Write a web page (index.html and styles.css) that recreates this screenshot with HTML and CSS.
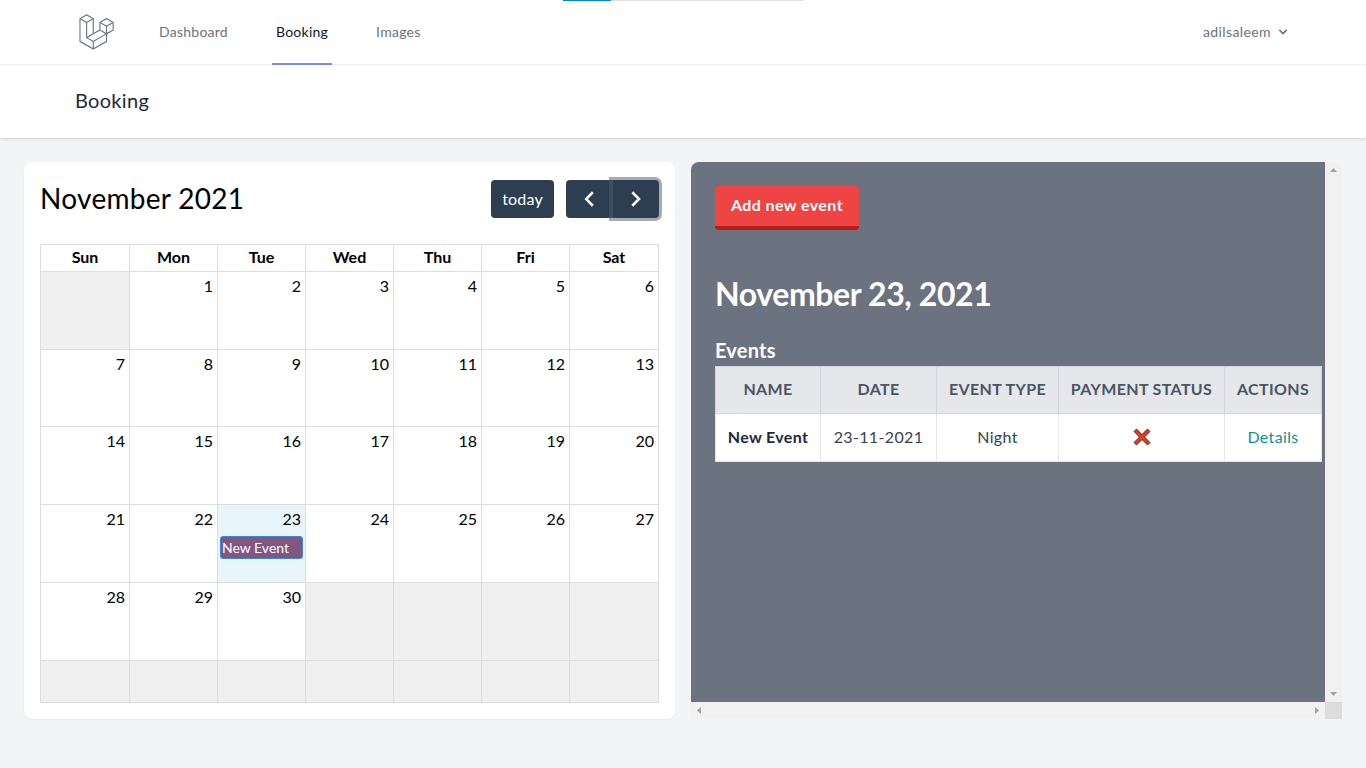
FILE: index.html
```html
<!DOCTYPE html>
<html lang="en">
<head>
    <title>Booking</title>
    <link rel="stylesheet" href="styles.css">
</head>
<body>
    <!-- page load progress -->
    <div class="progress">
        <div class="progress-done"></div>
        <div class="progress-rest"></div>
    </div>

    <nav class="topnav">
        <div class="topnav-left">
            <svg class="logo" viewBox="0 0 316 316" xmlns="http://www.w3.org/2000/svg"><path d="M305.8 81.125C305.77 80.995 305.69 80.885 305.65 80.755C305.56 80.525 305.49 80.285 305.37 80.075C305.29 79.935 305.17 79.815 305.07 79.685C304.94 79.515 304.83 79.325 304.68 79.175C304.55 79.045 304.39 78.955 304.25 78.845C304.09 78.715 303.95 78.575 303.77 78.475L251.32 48.275C249.97 47.495 248.31 47.495 246.96 48.275L194.51 78.475C194.33 78.575 194.19 78.725 194.03 78.845C193.89 78.955 193.73 79.045 193.6 79.175C193.45 79.325 193.34 79.515 193.21 79.685C193.11 79.815 192.99 79.935 192.91 80.075C192.79 80.285 192.71 80.525 192.63 80.755C192.58 80.875 192.51 80.995 192.48 81.125C192.38 81.495 192.33 81.875 192.33 82.265V139.625L148.62 164.795V52.575C148.62 52.185 148.57 51.805 148.47 51.435C148.44 51.305 148.36 51.195 148.32 51.065C148.23 50.835 148.16 50.595 148.04 50.385C147.96 50.245 147.84 50.125 147.74 49.995C147.61 49.825 147.5 49.635 147.35 49.485C147.22 49.355 147.06 49.265 146.92 49.155C146.76 49.025 146.62 48.885 146.44 48.785L93.99 18.585C92.64 17.805 90.98 17.805 89.63 18.585L37.18 48.785C37 48.885 36.86 49.035 36.7 49.155C36.56 49.265 36.4 49.355 36.27 49.485C36.12 49.635 36.01 49.825 35.88 49.995C35.78 50.125 35.66 50.245 35.58 50.385C35.46 50.595 35.38 50.835 35.3 51.065C35.25 51.185 35.18 51.305 35.15 51.435C35.05 51.805 35 52.185 35 52.575V232.235C35 233.795 35.84 235.245 37.19 236.025L142.1 296.425C142.33 296.555 142.58 296.635 142.83 296.725C142.95 296.765 143.06 296.835 143.18 296.865C143.55 296.965 143.93 297.015 144.31 297.015C144.69 297.015 145.07 296.965 145.44 296.865C145.55 296.835 145.65 296.775 145.76 296.735C146.02 296.645 146.28 296.565 146.52 296.425L251.43 236.025C252.79 235.245 253.62 233.805 253.62 232.235V174.885L303.88 145.945C305.24 145.165 306.07 143.725 306.07 142.155V82.265C305.95 81.875 305.89 81.495 305.8 81.125ZM144.2 227.205L100.57 202.515L146.39 176.135L196.66 147.195L240.33 172.335L208.29 190.625L144.2 227.205ZM244.75 114.995V164.795L226.39 154.225L201.03 139.625V89.825L219.39 100.395L244.75 114.995ZM249.12 57.105L292.81 82.265L249.12 107.425L205.43 82.265L249.12 57.105ZM114.49 184.425L96.13 194.995V85.305L121.49 70.705L139.85 60.135V169.815L114.49 184.425ZM91.76 27.425L135.45 52.585L91.76 77.745L48.07 52.585L91.76 27.425ZM43.67 60.135L62.03 70.705L87.39 85.305V202.545V202.555V202.565C87.39 202.735 87.44 202.895 87.46 203.055C87.49 203.265 87.49 203.485 87.55 203.695V203.705C87.6 203.875 87.69 204.035 87.76 204.195C87.84 204.375 87.89 204.575 87.99 204.745C87.99 204.745 87.99 204.755 88 204.755C88.09 204.905 88.22 205.035 88.33 205.175C88.45 205.335 88.55 205.495 88.69 205.635L88.7 205.645C88.82 205.765 88.98 205.855 89.12 205.965C89.28 206.085 89.42 206.225 89.59 206.325C89.6 206.325 89.6 206.325 89.61 206.335C89.62 206.335 89.62 206.345 89.63 206.345L139.87 234.775V285.065L43.67 229.705V60.135ZM244.75 229.705L148.58 285.075V234.775L219.8 194.115L244.75 179.875V229.705ZM297.2 139.625L253.49 164.795V114.995L278.85 100.395L297.21 89.825V139.625H297.2Z"/></svg>
            <a class="navlink" href="#">Dashboard</a>
            <a class="navlink active" href="#">Booking</a>
            <a class="navlink" href="#">Images</a>
        </div>
        <div class="usermenu">
            <span>adilsaleem</span>
            <svg class="chevron" viewBox="0 0 20 20"><path fill-rule="evenodd" d="M5.293 7.293a1 1 0 011.414 0L10 10.586l3.293-3.293a1 1 0 111.414 1.414l-4 4a1 1 0 01-1.414 0l-4-4a1 1 0 010-1.414z" clip-rule="evenodd"/></svg>
        </div>
    </nav>

    <header class="pagehead">
        <h2>Booking</h2>
    </header>

    <main class="columns">
        <!-- calendar -->
        <section class="card">
            <div class="cal-toolbar">
                <h3>November 2021</h3>
                <div class="cal-buttons">
                    <button class="cal-btn today-btn">today</button>
                    <div class="cal-group">
                        <button class="cal-btn arrow-btn">
                            <svg viewBox="0 0 16 16"><path d="M11.400 2 5.400 8l6 6"/></svg>
                        </button>
                        <button class="cal-btn arrow-btn focused">
                            <svg viewBox="0 0 16 16"><path d="M4.700 2l6 6-6 6"/></svg>
                        </button>
                    </div>
                </div>
            </div>
            <table class="cal">
                <thead>
                    <tr><th>Sun</th><th>Mon</th><th>Tue</th><th>Wed</th><th>Thu</th><th>Fri</th><th>Sat</th></tr>
                </thead>
                <tbody>
                    <tr class="wk-a"><td class="off"></td><td>1</td><td>2</td><td>3</td><td>4</td><td>5</td><td>6</td></tr>
                    <tr class="wk-b"><td>7</td><td>8</td><td>9</td><td>10</td><td>11</td><td>12</td><td>13</td></tr>
                    <tr class="wk-a"><td>14</td><td>15</td><td>16</td><td>17</td><td>18</td><td>19</td><td>20</td></tr>
                    <tr class="wk-a"><td>21</td><td>22</td><td class="now">23<div class="cal-event">New Event</div></td><td>24</td><td>25</td><td>26</td><td>27</td></tr>
                    <tr class="wk-a"><td>28</td><td>29</td><td>30</td><td class="off"></td><td class="off"></td><td class="off"></td><td class="off"></td></tr>
                    <tr class="wk-last"><td class="off"></td><td class="off"></td><td class="off"></td><td class="off"></td><td class="off"></td><td class="off"></td><td class="off"></td></tr>
                </tbody>
            </table>
        </section>

        <!-- selected day -->
        <section class="daybox">
            <div class="day-panel">
                <button class="add-btn">Add new event</button>
                <h1>November 23, 2021</h1>
                <h4>Events</h4>
                <table class="events">
                    <thead>
                        <tr><th class="c1">NAME</th><th class="c2">DATE</th><th class="c3">EVENT TYPE</th><th class="c4">PAYMENT STATUS</th><th class="c5">ACTIONS</th></tr>
                    </thead>
                    <tbody>
                        <tr>
                            <td class="ev-name">New Event</td>
                            <td>23-11-2021</td>
                            <td>Night</td>
                            <td>
                                <svg class="cross" viewBox="0 0 18 18"><path d="M3.500 1 9 6.500 14.500 1 17 3.500 11.500 9 17 14.500 14.500 17 9 11.500 3.500 17 1 14.500 6.500 9 1 3.500z"/></svg>
                            </td>
                            <td><a class="details" href="#">Details</a></td>
                        </tr>
                    </tbody>
                </table>
            </div>
            <div class="vbar">
                <svg viewBox="0 0 17 17"><path d="M8.500 6 12 10H5z"/></svg>
                <svg viewBox="0 0 17 17"><path d="M5 7h7l-3.500 4z"/></svg>
            </div>
            <div class="hbar">
                <svg viewBox="0 0 17 17"><path d="M10 5v7L6 8.500z"/></svg>
                <svg viewBox="0 0 17 17"><path d="M7 5v7l4-3.500z"/></svg>
            </div>
            <div class="corner"></div>
        </section>
    </main>
</body>
</html>
```

FILE: styles.css
```css
* {
    box-sizing: border-box;
}

html,
body {
    height: 100%;
}

body {
    margin: 0;
    font-family: Lato, "Noto Sans", Arial, sans-serif;
    font-size: 16px;
    color: #111827;
    background-color: #f3f4f6;
    overflow: hidden;
}

a {
    text-decoration: none;
}

button {
    font-family: inherit;
    border: none;
}

.progress {
    display: flex;
    height: 1px;
    padding-left: 563px;
    background-color: #fff;
}

.progress-done {
    width: 48px;
    background-color: #0a80e2;
}

.progress-rest {
    width: 193px;
    background-color: #e2e2e2;
}

/* top nav */
.topnav {
    display: flex;
    justify-content: space-between;
    align-items: stretch;
    height: 64px;
    padding: 0 75px;
    background-color: #fff;
    border-bottom: 1px solid #f3f4f6;
}

.topnav-left {
    display: flex;
    align-items: stretch;
}

.logo {
    width: 40px;
    height: 40px;
    margin: 11px 40px 0 0;
    fill: #6b7280;
}

.navlink {
    display: flex;
    align-items: center;
    height: 64px;
    padding: 0 4px 2px;
    margin-right: 40px;
    font-size: 14px;
    letter-spacing: 0.25px;
    color: #6b7280;
    border-bottom: 2px solid transparent;
}

.navlink.active {
    color: #111827;
    border-bottom-color: #818cf8;
}

.usermenu {
    display: flex;
    align-items: center;
    padding-bottom: 2px;
    font-size: 14px;
    letter-spacing: 0.4px;
    color: #6b7280;
}

.chevron {
    width: 16px;
    height: 16px;
    margin-left: 4px;
    fill: #6b7280;
}

.pagehead {
    height: 73px;
    padding: 0 75px 3px;
    display: flex;
    align-items: center;
    background-color: #fff;
    box-shadow: 0 1px 3px rgba(0, 0, 0, 0.15);
    position: relative;
}

.pagehead h2 {
    margin: 0;
    font-size: 20px;
    font-weight: 400;
    letter-spacing: 0.3px;
    color: #1f2937;
}

/* two columns */
.columns {
    display: grid;
    grid-template-columns: 651px 651px;
    gap: 16px;
    padding: 24px 24px 0;
}

.card {
    height: 557px;
    padding: 16px;
    background-color: #fff;
    border-radius: 8px;
    box-shadow: 0 1px 2px rgba(0, 0, 0, 0.06);
}

.cal-toolbar {
    display: flex;
    justify-content: space-between;
    align-items: center;
    height: 40px;
    margin-top: 1px;
    margin-bottom: 25px;
}

.cal-toolbar h3 {
    margin: 0;
    padding-bottom: 3px;
    font-size: 28px;
    font-weight: 400;
    letter-spacing: 0.3px;
    color: #000;
}

.cal-buttons {
    display: flex;
    gap: 12px;
}

.cal-btn {
    height: 38px;
    color: #fff;
    background-color: #2c3e50;
    border-radius: 4px;
    font-size: 16px;
}

.today-btn {
    width: 63px;
    padding: 0 0 2px;
    letter-spacing: 0.2px;
}

.cal-group {
    display: flex;
}

.arrow-btn {
    width: 46px;
    padding: 0;
    display: flex;
    align-items: center;
    justify-content: center;
    border-radius: 4px 0 0 4px;
}

.arrow-btn svg {
    width: 18px;
    height: 18px;
    fill: none;
    stroke: #fff;
    stroke-width: 2.2;
}

.arrow-btn.focused {
    width: 47px;
    border-radius: 0 4px 4px 0;
    border-left: 1px solid #3e5163;
    box-shadow: 0 0 0 3px rgba(76, 91, 106, 0.5);
    position: relative;
}

/* calendar table */
.cal {
    width: 618px;
    table-layout: fixed;
    border-collapse: collapse;
    font-size: 16px;
    color: #000;
}

.cal th,
.cal td {
    border: 1px solid #ddd;
}

.cal th {
    width: 88px;
    height: 27px;
    padding: 0 0 2px;
    font-weight: 700;
    line-height: 1;
}

.cal th:first-child,
.cal th:last-child {
    width: 89px;
}

.cal td {
    padding: 4px 4px 0;
    text-align: right;
    vertical-align: top;
}

.wk-a td {
    height: 78px;
}

.wk-b td {
    height: 77px;
}

.wk-last td {
    height: 42px;
}

.cal td.off {
    background-color: #f0f0f0;
}

.cal td.now {
    background-color: #e8f6fb;
}

.cal-event {
    margin: 8px -2px 0 -2px;
    padding-left: 1px;
    height: 23px;
    line-height: 21px;
    font-size: 14px;
    text-align: left;
    color: #fff;
    background-color: #835682;
    border: 1px solid #3788d8;
    border-radius: 3px;
}

/* right panel */
.daybox {
    display: grid;
    grid-template-columns: 634px 17px;
    grid-template-rows: 540px 17px;
    height: 557px;
}

.day-panel {
    padding: 24px;
    overflow: hidden;
    background-color: #6b7280;
    border-radius: 8px 0 0 0;
    color: #fff;
}

.add-btn {
    display: block;
    width: 144px;
    height: 44px;
    padding: 0 0 4px;
    font-size: 16px;
    font-weight: 700;
    letter-spacing: 0.4px;
    color: #fff;
    background-color: #ef4444;
    border-bottom: 4px solid #b91c1c;
    border-radius: 4px;
}

.day-panel h1 {
    margin: 45px 0 0;
    font-size: 32px;
    line-height: 38px;
    font-weight: 700;
    letter-spacing: -0.4px;
}

.day-panel h4 {
    margin: 24px 0 0;
    padding-bottom: 3px;
    font-size: 20px;
    line-height: 26px;
    font-weight: 700;
    letter-spacing: 0.2px;
}

.events {
    width: 607px;
    table-layout: fixed;
    border-collapse: collapse;
    font-size: 16px;
    letter-spacing: 0.35px;
    color: #374151;
    background-color: #fff;
}

.events th,
.events td {
    height: 48px;
    padding: 0 0 2px;
    text-align: center;
}

.events th {
    height: 47px;
    padding-bottom: 4px;
    font-weight: 700;
    color: #4b5563;
    background-color: #e5e7eb;
    border: 1px solid #d1d5db;
}

.events td {
    border: 1px solid #e5e7eb;
}

.c1 {
    width: 105px;
}

.c2 {
    width: 116px;
}

.c3 {
    width: 122px;
}

.c4 {
    width: 166px;
}

.events td.ev-name {
    font-weight: 700;
    color: #1f2937;
}

.cross {
    display: block;
    width: 18px;
    height: 18px;
    margin: 0 auto;
    fill: #e8391c;
    stroke: #1a1a1a;
    stroke-width: 0.8;
}

.details {
    color: #0d9488;
}

/* painted scrollbars */
.vbar {
    display: flex;
    flex-direction: column;
    justify-content: space-between;
    background-color: #f1f1f1;
}

.hbar {
    display: flex;
    justify-content: space-between;
    background-color: #f1f1f1;
}

.vbar svg,
.hbar svg {
    width: 17px;
    height: 17px;
    fill: #a3a3a3;
}

.corner {
    background-color: #dcdcdc;
}
```
